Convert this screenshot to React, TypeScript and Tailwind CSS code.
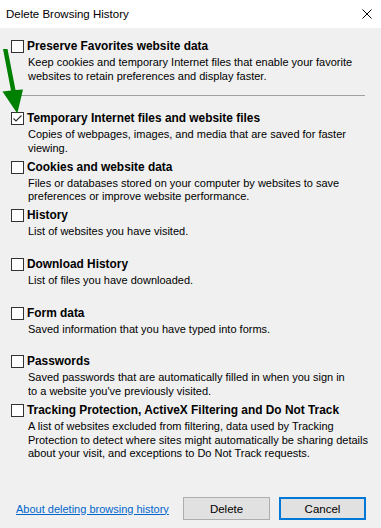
import React from "react";

type Item = { title: string; desc: string[]; checked?: boolean };

const items: Item[] = [
  {
    title: "Temporary Internet files and website files",
    desc: ["Copies of webpages, images, and media that are saved for faster", "viewing."],
    checked: true,
  },
  {
    title: "Cookies and website data",
    desc: ["Files or databases stored on your computer by websites to save", "preferences or improve website performance."],
  },
  { title: "History", desc: ["List of websites you have visited."] },
  { title: "Download History", desc: ["List of files you have downloaded."] },
  { title: "Form data", desc: ["Saved information that you have typed into forms."] },
  {
    title: "Passwords",
    desc: ["Saved passwords that are automatically filled in when you sign in", "to a website you've previously visited."],
  },
  {
    title: "Tracking Protection, ActiveX Filtering and Do Not Track",
    desc: [
      "A list of websites excluded from filtering, data used by Tracking",
      "Protection to detect where sites might automatically be sharing details",
      "about your visit, and exceptions to Do Not Track requests.",
    ],
  },
];

function Box({ checked }: { checked?: boolean }) {
  return (
    <div className="w-[13px] h-[13px] border border-[#333333] bg-white flex items-center justify-center shrink-0">
      {checked && (
        <svg width="11" height="11" viewBox="0 0 11 11">
          <path d="M1.5 5.5 L4 8 L9.5 2.5" stroke="#333333" strokeWidth="1.2" fill="none" />
        </svg>
      )}
    </div>
  );
}

function Entry({ item }: { item: Item }) {
  return (
    <div className="flex flex-col whitespace-nowrap">
      <div className="h-[15px] flex items-center">
        <Box checked={item.checked} />
        <span className="ml-[3px] font-bold text-black text-[11.9px] leading-[15px]">{item.title}</span>
      </div>
      <div className="ml-[17px] mt-[2px] leading-[13.5px] text-black">
        {item.desc.map((d, i) => (
          <div key={i}>{d}</div>
        ))}
      </div>
    </div>
  );
}

export default function App() {
  return (
    <div
      className="relative w-[381px] h-[528px] bg-[#f0f0f0] overflow-hidden flex flex-col text-[11px]"
      style={{ fontFamily: '"Liberation Sans", Arial, sans-serif' }}
    >
      <div className="h-[28px] bg-white flex items-center pl-[6px] pr-[9px] shrink-0">
        <span className="flex-1 text-black text-[11.5px] leading-[14px]">Delete Browsing History</span>
        <svg width="10" height="10" viewBox="0 0 10 10">
          <path d="M0.5 0.5 L9.5 9.5 M9.5 0.5 L0.5 9.5" stroke="#000" strokeWidth="1" />
        </svg>
      </div>

      <div className="flex flex-col pl-[11px] pt-[11px]">
        <Entry
          item={{
            title: "Preserve Favorites website data",
            desc: [
              "Keep cookies and temporary Internet files that enable your favorite",
              "websites to retain preferences and display faster.",
            ],
          }}
        />
        <div className="ml-[9px] w-[345px] h-px bg-[#a0a0a0] mt-[12px] mb-[15px]" />
        {items.map((it, i) => (
          <div key={i} className="h-[48.7px]">
            <Entry item={it} />
          </div>
        ))}
      </div>

      <div className="flex-1" />
      <div className="flex items-center pl-[16px] pr-[15px] pb-[8px]">
        <a className="flex-1 text-[#0066cc] underline leading-[14px] whitespace-nowrap">About deleting browsing history</a>
        <button className="w-[87px] h-[23px] bg-[#e1e1e1] border border-[#adadad] text-black text-[11.5px] leading-[14px]">Delete</button>
        <button className="ml-[9px] w-[87px] h-[23px] bg-[#e1e1e1] border-2 border-[#0078d7] text-black text-[11.5px] leading-[14px]">Cancel</button>
      </div>

      <svg className="absolute left-0 top-0" width="30" height="120" viewBox="0 0 30 120">
        <path d="M3 49 L7.5 49 L15.5 90 L23 89.5 L17.3 113.5 L2.5 91.5 L11 90.5 Z" fill="#008000" />
      </svg>
    </div>
  );
}
